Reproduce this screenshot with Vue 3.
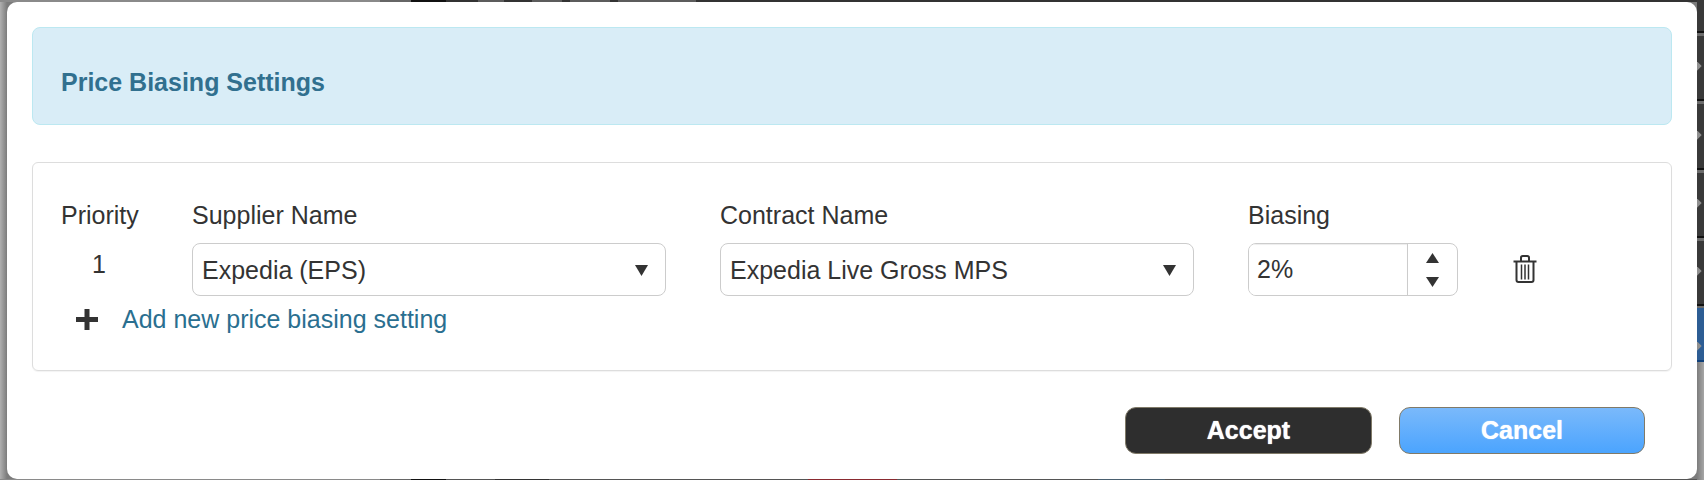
<script setup>
const rows = [31, 99, 168, 236, 304]
const marks = [62, 131, 199, 267, 342]
const topBits = [
  { left: 478, width: 26 }, { left: 532, width: 30 }, { left: 570, width: 40 }, { left: 618, width: 78 }
]
const bottomBits = [
  { left: 495, width: 54, color: '#333' }, { left: 808, width: 89, color: '#8a2a30' }, { left: 1098, width: 67, color: '#4a6070' }
]
</script>

<template>
  <div class="page">
    <div class="backdrop">
      <div class="strip-top">
        <span class="seg-mid"></span>
        <span class="seg-black"></span>
        <i v-for="b in topBits" :key="b.left" class="bit" :style="{ left: b.left + 'px', width: b.width + 'px' }"></i>
      </div>
      <div class="strip-bottom">
        <span class="seg-mid"></span>
        <span class="seg-black"></span>
        <i v-for="b in bottomBits" :key="b.left" class="bit" :style="{ left: b.left + 'px', width: b.width + 'px', background: b.color }"></i>
      </div>
      <div class="strip-right">
        <i v-for="r in rows" :key="r" class="sep" :style="{ top: r + 'px' }"></i>
        <div class="blue"></div>
        <i v-for="m in marks" :key="m" class="mark" :style="{ top: m + 'px' }"></i>
      </div>
    </div>

    <div class="modal">
      <div class="alert"><h4>Price Biasing Settings</h4></div>

      <div class="panel">
        <div class="grid">
          <span class="label">Priority</span>
          <span class="label">Supplier Name</span>
          <span class="label spaced">Contract Name</span>
          <span class="label spaced">Biasing</span>
          <span></span>

          <span class="priority">1</span>
          <div class="select-wrap">
            <select class="control"><option>Expedia (EPS)</option></select>
            <svg class="caret" width="13" height="11" viewBox="0 0 13 11"><path d="M0 0h13L6.500 11z" /></svg>
          </div>
          <div class="select-wrap spaced">
            <select class="control"><option>Expedia Live Gross MPS</option></select>
            <svg class="caret" width="13" height="11" viewBox="0 0 13 11"><path d="M0 0h13L6.500 11z" /></svg>
          </div>
          <div class="spinner spaced">
            <input class="spin-input" value="2%" />
            <div class="spin-btns">
              <svg width="13" height="10" viewBox="0 0 13 10"><path d="M6.500 0L13 10H0z" /></svg>
              <svg width="13" height="10" viewBox="0 0 13 10"><path d="M0 0h13L6.500 10z" /></svg>
            </div>
          </div>
          <svg class="trash" width="24" height="28" viewBox="0 0 24 28" fill="none" stroke="#333">
            <path d="M0.500 6.500H23.500" stroke-width="2" />
            <path d="M8 6V2.800C8 1.800 8.800 1 9.800 1h4.400c1 0 1.800 .8 1.800 1.800V6" stroke-width="2" />
            <path d="M3.500 7v18c0 1.300 .8 2 2 2h13c1.200 0 2-.7 2-2V7" stroke-width="2" />
            <path d="M8.500 9.500V24.500M12 9.500V24.500M15.500 9.500V24.500" stroke-width="1.500" />
          </svg>
        </div>

        <div class="add">
          <svg class="plus" width="22" height="21" viewBox="0 0 22 21"><path d="M8.500 0h5v8h8.500v5h-8.500v8h-5v-8H0V8h8.500z" fill="#333" /></svg>
          <a class="add-link">Add new price biasing setting</a>
        </div>
      </div>

      <div class="footer">
        <button class="btn accept">Accept</button>
        <button class="btn cancel">Cancel</button>
      </div>
    </div>
  </div>
</template>

<style scoped>
.page {
  position: relative;
  width: 1704px;
  height: 480px;
  overflow: hidden;
  background: linear-gradient(90deg, #b0b0b0 0, #7c7c7c 7px);
  font-family: "Liberation Sans", Arial, sans-serif;
  color: #333;
}
.backdrop { position: absolute; inset: 0; }
.strip-top, .strip-bottom {
  position: absolute;
  left: 0;
  width: 1704px;
}
.strip-top { top: 0; height: 2px; background: linear-gradient(90deg, #8a8a8a 0, #8a8a8a 380px, #333 380px); }
.strip-bottom { bottom: 0; height: 1px; background: linear-gradient(90deg, #8a8a8a 0, #8a8a8a 380px, #555 380px); }
.seg-mid { position: absolute; left: 380px; width: 31px; top: 0; bottom: 0; background: #666; }
.seg-black { position: absolute; left: 411px; width: 35px; top: 0; bottom: 0; background: #111; }
.bit { position: absolute; top: 0; height: 100%; background: #5c5c5c; }
.strip-right {
  position: absolute;
  top: 0;
  right: 0;
  width: 7px;
  height: 480px;
  overflow: hidden;
  background: linear-gradient(90deg, #7c7c7c, #a6a6a6);
}
.strip-right::before {
  content: "";
  position: absolute;
  inset: 0 0 176px 0;
  background: #393939;
}
.sep {
  position: absolute;
  left: 0;
  width: 7px;
  height: 2px;
  background: #111;
  border-bottom: 3px solid #6c6c6c;
}
.blue {
  position: absolute;
  left: 0;
  top: 308px;
  width: 7px;
  height: 54px;
  background: #2d5d94;
  border-bottom: 2px solid #10407a;
  box-sizing: border-box;
}
.mark {
  position: absolute;
  left: -5px;
  width: 8px;
  height: 8px;
  background: #8f8f8f;
  transform: rotate(45deg);
}

.modal {
  position: relative;
  box-sizing: border-box;
  width: 1690px;
  height: 477px;
  margin-left: 7px;
  top: 2px;
  padding: 25px 25px 0;
  background: #fff;
  border-radius: 10px;
}
.alert {
  box-sizing: border-box;
  height: 98px;
  display: flex;
  align-items: center;
  padding: 11px 0 0 28px;
  background: #d9edf7;
  border: 1px solid #bce8f1;
  border-radius: 8px;
  color: #31708f;
}
.alert h4 { margin: 0; font-size: 25px; line-height: 30px; font-weight: 700; }

.panel {
  box-sizing: border-box;
  height: 209px;
  margin-top: 37px;
  padding: 36px 0 0 28px;
  border: 1px solid #ddd;
  border-radius: 6px;
  box-shadow: 0 1px 1px rgba(0, 0, 0, .05);
}
.grid {
  display: grid;
  grid-template-columns: 131px 474px 528px 264px 1fr;
  row-gap: 11px;
  align-items: start;
}
.spaced { margin-left: 54px; }
.label { font-size: 25px; line-height: 33px; }
.priority { font-size: 25px; line-height: 30px; padding: 6px 0 0 31px; }
.select-wrap { position: relative; height: 53px; }
.control {
  appearance: none;
  -webkit-appearance: none;
  box-sizing: border-box;
  width: 100%;
  height: 53px;
  padding: 0 9px;
  border: 1px solid #ccc;
  border-radius: 8px;
  background: #fff;
  color: #333;
  font: 25px "Liberation Sans", Arial, sans-serif;
}
.caret { position: absolute; right: 18px; top: 22px; fill: #333; }
.spinner {
  display: flex;
  box-sizing: border-box;
  width: 210px;
  height: 53px;
  border: 1px solid #ccc;
  border-radius: 8px;
  overflow: hidden;
}
.spin-input {
  box-sizing: border-box;
  width: 159px;
  height: 100%;
  padding: 0 8px;
  border: 0;
  border-right: 1px solid #ccc;
  outline: 0;
  color: #333;
  font: 25px "Liberation Sans", Arial, sans-serif;
  box-shadow: inset 0 1px 1px rgba(0, 0, 0, .075);
}
.spin-btns {
  flex: 1;
  display: flex;
  flex-direction: column;
  align-items: center;
  justify-content: center;
  gap: 14px;
  fill: #333;
}
.trash { margin: 12px 0 0 55px; justify-self: start; }

.add { display: flex; align-items: center; margin-top: 8px; padding-left: 15px; height: 30px; }
.plus { flex: none; }
.add-link { margin-left: 24px; font-size: 25px; line-height: 30px; color: #2a6f90; }

.footer {
  display: flex;
  justify-content: flex-end;
  gap: 27px;
  margin-top: 36px;
  padding-right: 27px;
}
.btn {
  box-sizing: border-box;
  width: 246px;
  height: 47px;
  border: 1px solid #807a68;
  border-radius: 11px;
  color: #fff;
  font: 700 25px "Liberation Sans", Arial, sans-serif;
  text-shadow: 0 0 1px #fff;
}
.accept { background: #2e2e2e; width: 247px; }
.cancel { background: linear-gradient(180deg, #7ab9fb, #4ba4fe); }
</style>
